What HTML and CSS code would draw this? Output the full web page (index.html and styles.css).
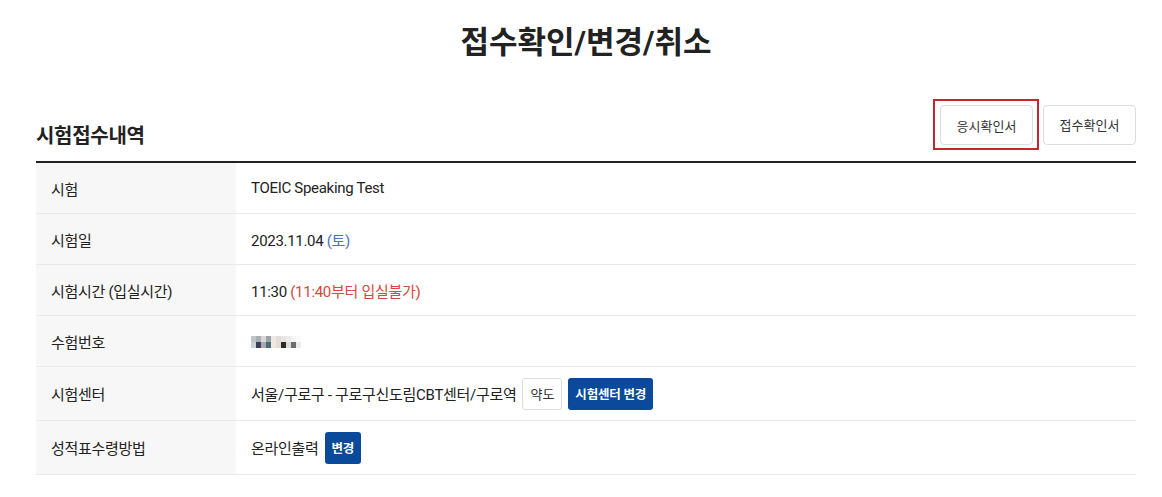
FILE: index.html
```html
<!DOCTYPE html>
<html lang="ko">
<head>
  <meta charset="UTF-8">
  <title>접수확인/변경/취소</title>
  <link rel="stylesheet" href="styles.css">
</head>
<body>
  <div class="wrap">
    <!-- 페이지 제목 -->
    <h1 class="page-title">접수확인/변경/취소</h1>

    <!-- 시험접수내역 -->
    <div class="section-head">
      <h2>시험접수내역</h2>
      <div class="doc-btns">
        <span class="focus-box"><button class="btn-line">응시확인서</button></span>
        <button class="btn-line">접수확인서</button>
      </div>
    </div>

    <table class="info-table">
      <tr>
        <th>시험</th>
        <td>TOEIC Speaking Test</td>
      </tr>
      <tr>
        <th>시험일</th>
        <td>2023.11.04 <span class="blue">(토)</span></td>
      </tr>
      <tr>
        <th>시험시간 (입실시간)</th>
        <td>11:30 <span class="red">(11:40부터 입실불가)</span></td>
      </tr>
      <tr>
        <th>수험번호</th>
        <td>
          <!-- 수험번호는 모자이크 처리 -->
          <span class="mosaic">
            <i style="background:#c2c4c8"></i><i style="background:#a9aeb7"></i><i style="background:#d8d8da"></i><i style="background:#9aa3a8"></i><i style="background:#eee8e4"></i><i style="background:#e2ddd6"></i><i style="background:#e8e6e4"></i><i style="background:#ecebea"></i><i style="background:#f4f4f5"></i><i style="background:#fbfbfb"></i>
            <i style="background:#c9d1da"></i><i style="background:#3b3f55"></i><i style="background:#a8a9ad"></i><i style="background:#4d6a77"></i><i style="background:#efe8e2"></i><i style="background:#e6ded2"></i><i style="background:#2c2b2c"></i><i style="background:#ded9d4"></i><i style="background:#6a6c72"></i><i style="background:#e9eaee"></i>
          </span>
        </td>
      </tr>
      <tr class="tall">
        <th>시험센터</th>
        <td>
          <div class="inline-row">
            서울/구로구 - 구로구신도림CBT센터/구로역
            <button class="btn-sm">약도</button>
            <button class="btn-blue">시험센터 변경</button>
          </div>
        </td>
      </tr>
      <tr class="tall">
        <th>성적표수령방법</th>
        <td>
          <div class="inline-row">
            온라인출력
            <button class="btn-blue">변경</button>
          </div>
        </td>
      </tr>
    </table>
  </div>
</body>
</html>
```

FILE: styles.css
```css
html, body {
  margin: 0;
  padding: 0;
  background: #ffffff;
  color: #222222;
  font-family: "Roboto", "Noto Sans CJK KR", sans-serif;
}

.wrap {
  width: 1100px;
  margin: 0 0 0 36px;
  padding-top: 20px;
}

.page-title {
  margin: 0;
  text-align: center;
  font-size: 31px;
  font-weight: 700;
  line-height: 46px;
  color: #222222;
}

/* 섹션 제목 + 확인서 버튼 */
.section-head {
  display: flex;
  align-items: flex-end;
  justify-content: space-between;
  margin-top: 33px;
  padding-bottom: 11px;
  border-bottom: 2px solid #222222;
}
.section-head h2 {
  margin: 0;
  font-size: 20px;
  font-weight: 700;
  line-height: 28px;
  letter-spacing: -0.3px;
}
.doc-btns {
  display: flex;
  align-items: center;
  gap: 4px;
}
.focus-box {
  display: inline-flex;
  padding: 4px 4px 3px 5px;
  border: 2px solid #c9252c;
}
.btn-line {
  width: 93px;
  height: 40px;
  background: #ffffff;
  border: 1px solid #dddddd;
  border-radius: 4px;
  font-family: inherit;
  font-size: 13px;
  color: #333333;
  padding: 0;
  cursor: pointer;
}

/* 정보 테이블 */
.info-table {
  width: 100%;
  border-collapse: collapse;
  font-size: 15px;
  letter-spacing: -0.3px;
}
.info-table th,
.info-table td {
  height: 50px;
  padding: 0 15px;
  border-bottom: 1px solid #eaeaea;
  text-align: left;
  vertical-align: middle;
}
.info-table th {
  width: 170px;
  background: #f7f7f7;
  font-weight: 400;
  color: #222222;
}
.info-table tr.tall th,
.info-table tr.tall td {
  height: 53px;
}

.blue { color: #4a72c0; }
.red  { color: #d9473a; }

.inline-row {
  display: flex;
  align-items: center;
  gap: 6px;
}

.btn-sm {
  height: 32px;
  padding: 0 7px;
  background: #ffffff;
  border: 1px solid #dddddd;
  border-radius: 3px;
  font-family: inherit;
  font-size: 13px;
  color: #333333;
}
.btn-blue {
  height: 32px;
  padding: 0 7px;
  background: #0b4a9b;
  border: none;
  border-radius: 3px;
  font-family: inherit;
  font-size: 12.5px;
  font-weight: 700;
  letter-spacing: -0.2px;
  color: #ffffff;
}

/* 수험번호 모자이크 */
.mosaic {
  display: inline-grid;
  grid-template-columns: repeat(10, 5px);
  grid-auto-rows: 6px;
  vertical-align: middle;
}
.mosaic i {
  display: block;
}
```
